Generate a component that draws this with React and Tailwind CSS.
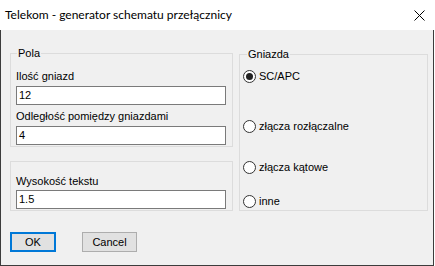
const Radio = ({ checked, label }) => (
  <div className="flex items-center h-[13px]">
    <span className="w-[13px] h-[13px] rounded-full border border-[#333333] bg-white flex items-center justify-center">
      {checked && <span className="w-[7px] h-[7px] rounded-full bg-[#222222]" />}
    </span>
    <span className="ml-[3px] leading-[13px]">{label}</span>
  </div>
);

const Field = ({ value }) => (
  <div className="h-[19px] w-[210px] border border-[#7a7a7a] bg-white pl-[2px] leading-[17px]">
    {value}
  </div>
);

const App = () => {
  return (
    <div className="w-[435px] h-[266px] flex flex-col font-['Liberation_Sans',Arial,sans-serif] text-[11px] text-black">
      <div className="h-[30px] bg-white flex items-center justify-between pl-[5px] pr-[10px] font-['Lato',sans-serif] text-[12px]">
        <span>Telekom - generator schematu przełącznicy</span>
        <svg width="11" height="11" viewBox="0 0 11 11">
          <path d="M0.5 0.5 L10.5 10.5 M10.5 0.5 L0.5 10.5" stroke="#000" strokeWidth="1" />
        </svg>
      </div>

      <div className="flex-1 w-[434px] bg-[#f0f0f0] border-l border-r border-b border-[#3c3c3c] flex flex-col">
        <div className="flex pt-[17px] pl-[9px]">
          <div className="w-[223px] flex flex-col">
            <fieldset className="h-[100px] border border-[#dcdcdc] p-0 m-0">
              <legend className="ml-[6px] px-[1px] leading-[13px]">Pola</legend>
              <div className="pl-[5px] flex flex-col">
                <div className="mt-[10px] leading-[13px]">Ilość gniazd</div>
                <div className="mt-[3px]">
                  <Field value="12" />
                </div>
                <div className="mt-[5px] leading-[13px]">Odległość pomiędzy gniazdami</div>
                <div className="mt-[3px]">
                  <Field value="4" />
                </div>
              </div>
            </fieldset>

            <div className="mt-[14px] h-[50px] border border-[#dcdcdc] pl-[5px] pt-[13px] flex flex-col">
              <div className="leading-[13px]">Wysokość tekstu</div>
              <div className="mt-[2px]">
                <Field value="1.5" />
              </div>
            </div>
          </div>

          <fieldset className="ml-[6px] mt-[1px] w-[189px] h-[163px] border border-[#dcdcdc] p-0 m-0">
            <legend className="ml-[7px] px-[1px] leading-[13px]">Gniazda</legend>
            <div className="pl-[3px] pt-[9px] flex flex-col">
              <Radio checked label="SC/APC" />
              <div className="mt-[37px]">
                <Radio label="złącza rozłączalne" />
              </div>
              <div className="mt-[28px]">
                <Radio label="złącza kątowe" />
              </div>
              <div className="mt-[21px]">
                <Radio label="inne" />
              </div>
            </div>
          </fieldset>
        </div>

        <div className="flex mt-[21px] pl-[9px] gap-[26px]">
          <button className="w-[46px] h-[20px] border-2 border-[#0078d7] bg-[#e1e1e1] leading-[16px]">
            OK
          </button>
          <button className="w-[55px] h-[20px] border border-[#adadad] bg-[#e1e1e1] leading-[18px]">
            Cancel
          </button>
        </div>
      </div>
    </div>
  );
};

export default App;
